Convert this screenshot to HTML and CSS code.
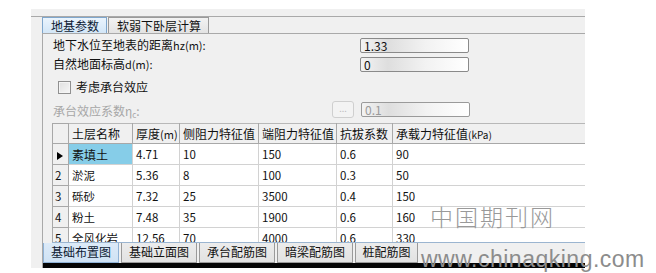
FILE: index.html
```html
<!DOCTYPE html>
<html lang="zh">
<head>
<meta charset="utf-8">
<link rel="stylesheet" href="styles.css">
</head>
<body>
<div class="page">
  <div class="panel">
    <div class="topstrip"></div>
    <div class="tabs">
      <div class="tab tab-active">地基参数</div>
      <div class="tab tab-2">软弱下卧层计算</div>
    </div>
    <div class="content">
      <div class="frow r1">
        <span class="lbl">地下水位至地表的距离<span class="lat">hz(m):</span></span>
        <div class="inp">1.33</div>
      </div>
      <div class="frow r2">
        <span class="lbl">自然地面标高<span class="lat">d(m):</span></span>
        <div class="inp">0</div>
      </div>
      <div class="crow">
        <span class="cbox"></span>
        <span class="clbl">考虑承台效应</span>
      </div>
      <div class="frow r4">
        <span class="lbl dis">承台效应系数η<sub>c</sub>:</span>
        <div class="btn">...</div>
        <div class="inp inp-dis">0.1</div>
      </div>
      <div class="grid">
        <table>
          <colgroup>
            <col class="c0"><col class="c1"><col class="c2"><col class="c3"><col class="c4"><col class="c5"><col class="c6">
          </colgroup>
          <thead>
            <tr><th class="rh"></th><th>土层名称</th><th>厚度<span class="lat">(m)</span></th><th>侧阻力特征值</th><th>端阻力特征值</th><th>抗拔系数</th><th>承载力特征值<span class="sm">(kPa)</span></th></tr>
          </thead>
          <tbody>
            <tr><td class="rh"><span class="tri"></span></td><td class="sel">素填土</td><td>4.71</td><td>10</td><td>150</td><td>0.6</td><td>90</td></tr>
            <tr><td class="rh">2</td><td>淤泥</td><td>5.36</td><td>8</td><td>100</td><td>0.3</td><td>50</td></tr>
            <tr><td class="rh">3</td><td>砾砂</td><td>7.32</td><td>25</td><td>3500</td><td>0.4</td><td>150</td></tr>
            <tr><td class="rh">4</td><td>粉土</td><td>7.48</td><td>35</td><td>1900</td><td>0.6</td><td>160</td></tr>
            <tr><td class="rh">5</td><td>全风化岩</td><td>12.56</td><td>70</td><td>4000</td><td>0.6</td><td>330</td></tr>
          </tbody>
        </table>
      </div>
      <div class="btabs">
        <div class="btab btab-active">基础布置图</div>
        <div class="btab">基础立面图</div>
        <div class="btab">承台配筋图</div>
        <div class="btab">暗梁配筋图</div>
        <div class="btab btab-last">桩配筋图</div>
      </div>
      <div class="blackbar"></div>
    </div>
  </div>
  <div class="wm1">中国期刊网</div>
  <div class="wm2">www.chinaqking.com</div>
</div>
</body>
</html>
```
FILE: styles.css
```css
html, body {
  margin: 0;
  padding: 0;
  background: #ffffff;
}
body {
  width: 656px;
  height: 273px;
  overflow: hidden;
  font-family: "Noto Sans CJK SC", "Liberation Sans", sans-serif;
  font-size: 12px;
  color: #111;
}
.page {
  position: relative;
  width: 656px;
  height: 273px;
  padding: 9px 0 0 31px;
  box-sizing: border-box;
}
.panel {
  width: 554px;
  height: 259px;
  background: #f0f0f0;
  display: flex;
  flex-direction: column;
}
.topstrip {
  height: 8px;
  border-bottom: 1px solid #a9a9a9;
}
.tabs {
  display: flex;
  height: 16px;
  padding-left: 11px;
}
.tab {
  height: 16px;
  box-sizing: border-box;
  line-height: 15px;
  padding: 0 8px;
  border: 1px solid #9a9a9a;
  border-bottom: none;
  white-space: nowrap;
}
.tab-active {
  width: 65px;
  background: linear-gradient(#eaf4fd, #d3e6f7);
  border-color: #7fa6cc;
  color: #0d1a33;
}
.tab-2 {
  width: 101px;
  background: linear-gradient(#f2f2f2, #e3e3e3);
  margin-left: 1px;
}
.content {
  flex: 1;
  margin-left: 11px;
  border-left: 1px solid #a9a9a9;
  border-top: 1px solid #a9a9a9;
  display: flex;
  flex-direction: column;
  padding-top: 3px;
}
.frow {
  display: flex;
  align-items: center;
  height: 16px;
}
.frow .lbl {
  width: 307px;
  padding-left: 10px;
  white-space: nowrap;
  line-height: 16px;
}
.lat { font-size: 11px; }
.r2 { margin-top: 3px; }
.r4 { margin-top: 7px; height: 17px; }
.r4 .lbl { width: 279px; padding-top: 6px; }
.lbl.dis { color: #a7a7a7; }
.lbl sub { font-size: 8px; vertical-align: -2px; }
.inp {
  width: 109px;
  height: 15px;
  box-sizing: border-box;
  border: 1px solid #8a8a8a;
  border-radius: 2px;
  background: linear-gradient(90deg, #f3f3f3 0%, #dedede 25%, #f2f2f2 60%, #ffffff 100%);
  padding-left: 3px;
  line-height: 13px;
  font-size: 12px;
  color: #111;
}
.inp-dis {
  color: #9a9a9a;
  border-color: #9a9a9a;
}
.btn {
  width: 22px;
  height: 17px;
  box-sizing: border-box;
  border: 1px solid #cfcfcf;
  border-radius: 3px;
  background: #f3f3f3;
  color: #bdbdbd;
  font-size: 9px;
  text-align: center;
  line-height: 13px;
  margin-right: 7px;
}
.crow {
  display: flex;
  align-items: center;
  height: 14px;
  margin-top: 8px;
  padding-left: 15px;
}
.cbox {
  width: 13px;
  height: 13px;
  box-sizing: border-box;
  border: 1px solid #909090;
  background: linear-gradient(135deg, #e0e0e0, #f6f6f6);
  box-shadow: inset 0 0 0 1px #f4f4f4;
}
.clbl {
  margin-left: 5px;
  line-height: 14px;
}
.grid {
  margin-top: 5px;
  margin-left: 9px;
  height: 119px;
  overflow: hidden;
  border-bottom: 1px solid #9bb5d0;
}
table {
  border-collapse: collapse;
  table-layout: fixed;
  width: 533px;
}
.c0 { width: 16px; }
.c1 { width: 64px; }
.c2 { width: 47px; }
.c3 { width: 79px; }
.c4 { width: 78px; }
.c5 { width: 56px; }
.c6 { width: 193px; }
th, td {
  text-align: left;
  white-space: nowrap;
  overflow: hidden;
  padding: 0 0 0 3px;
  font-weight: normal;
}
th {
  height: 19px;
  background: #f0f0f0;
  border: 1px solid #a8a8a8;
  border-top-color: #b8b8b8;
}
td {
  height: 20px;
  background: #ffffff;
  border: 1px solid #d2d2d2;
  font-size: 11.5px;
}
td.rh, th.rh {
  background: #f0f0f0;
  border-color: #a8a8a8;
  padding-left: 2px;
}
td.sel { background: #86cde8; font-size: 12px; }
.sm { font-size: 10px; }
.tri {
  display: inline-block;
  width: 0;
  height: 0;
  border-top: 4px solid transparent;
  border-bottom: 4px solid transparent;
  border-left: 6px solid #000;
  margin-left: 2px;
  vertical-align: -1px;
}
.btabs {
  display: flex;
  height: 20px;
  gap: 2px;
}
.btab {
  width: 76px;
  height: 20px;
  box-sizing: border-box;
  border: 1px solid #9a9a9a;
  border-top: none;
  background: linear-gradient(#ececec, #e2e2e2);
  text-align: center;
  line-height: 18px;
  white-space: nowrap;
}
.btab-active {
  background: linear-gradient(#dceaf8, #cfe2f4);
  border-color: #8fb2d6;
  color: #0d1a33;
}
.btab-last { width: 63px; }
.blackbar {
  height: 5px;
  background: #050505;
}
.wm1 {
  position: absolute;
  left: 430px;
  top: 199px;
  font-size: 23px;
  letter-spacing: 2px;
  color: #999999;
  font-weight: 300;
  font-family: "Noto Sans CJK SC", sans-serif;
}
.wm2 {
  position: absolute;
  left: 421px;
  top: 246px;
  font-size: 23px;
  letter-spacing: 0.5px;
  color: #8c8c8c;
  font-family: "Liberation Sans", sans-serif;
}
```
